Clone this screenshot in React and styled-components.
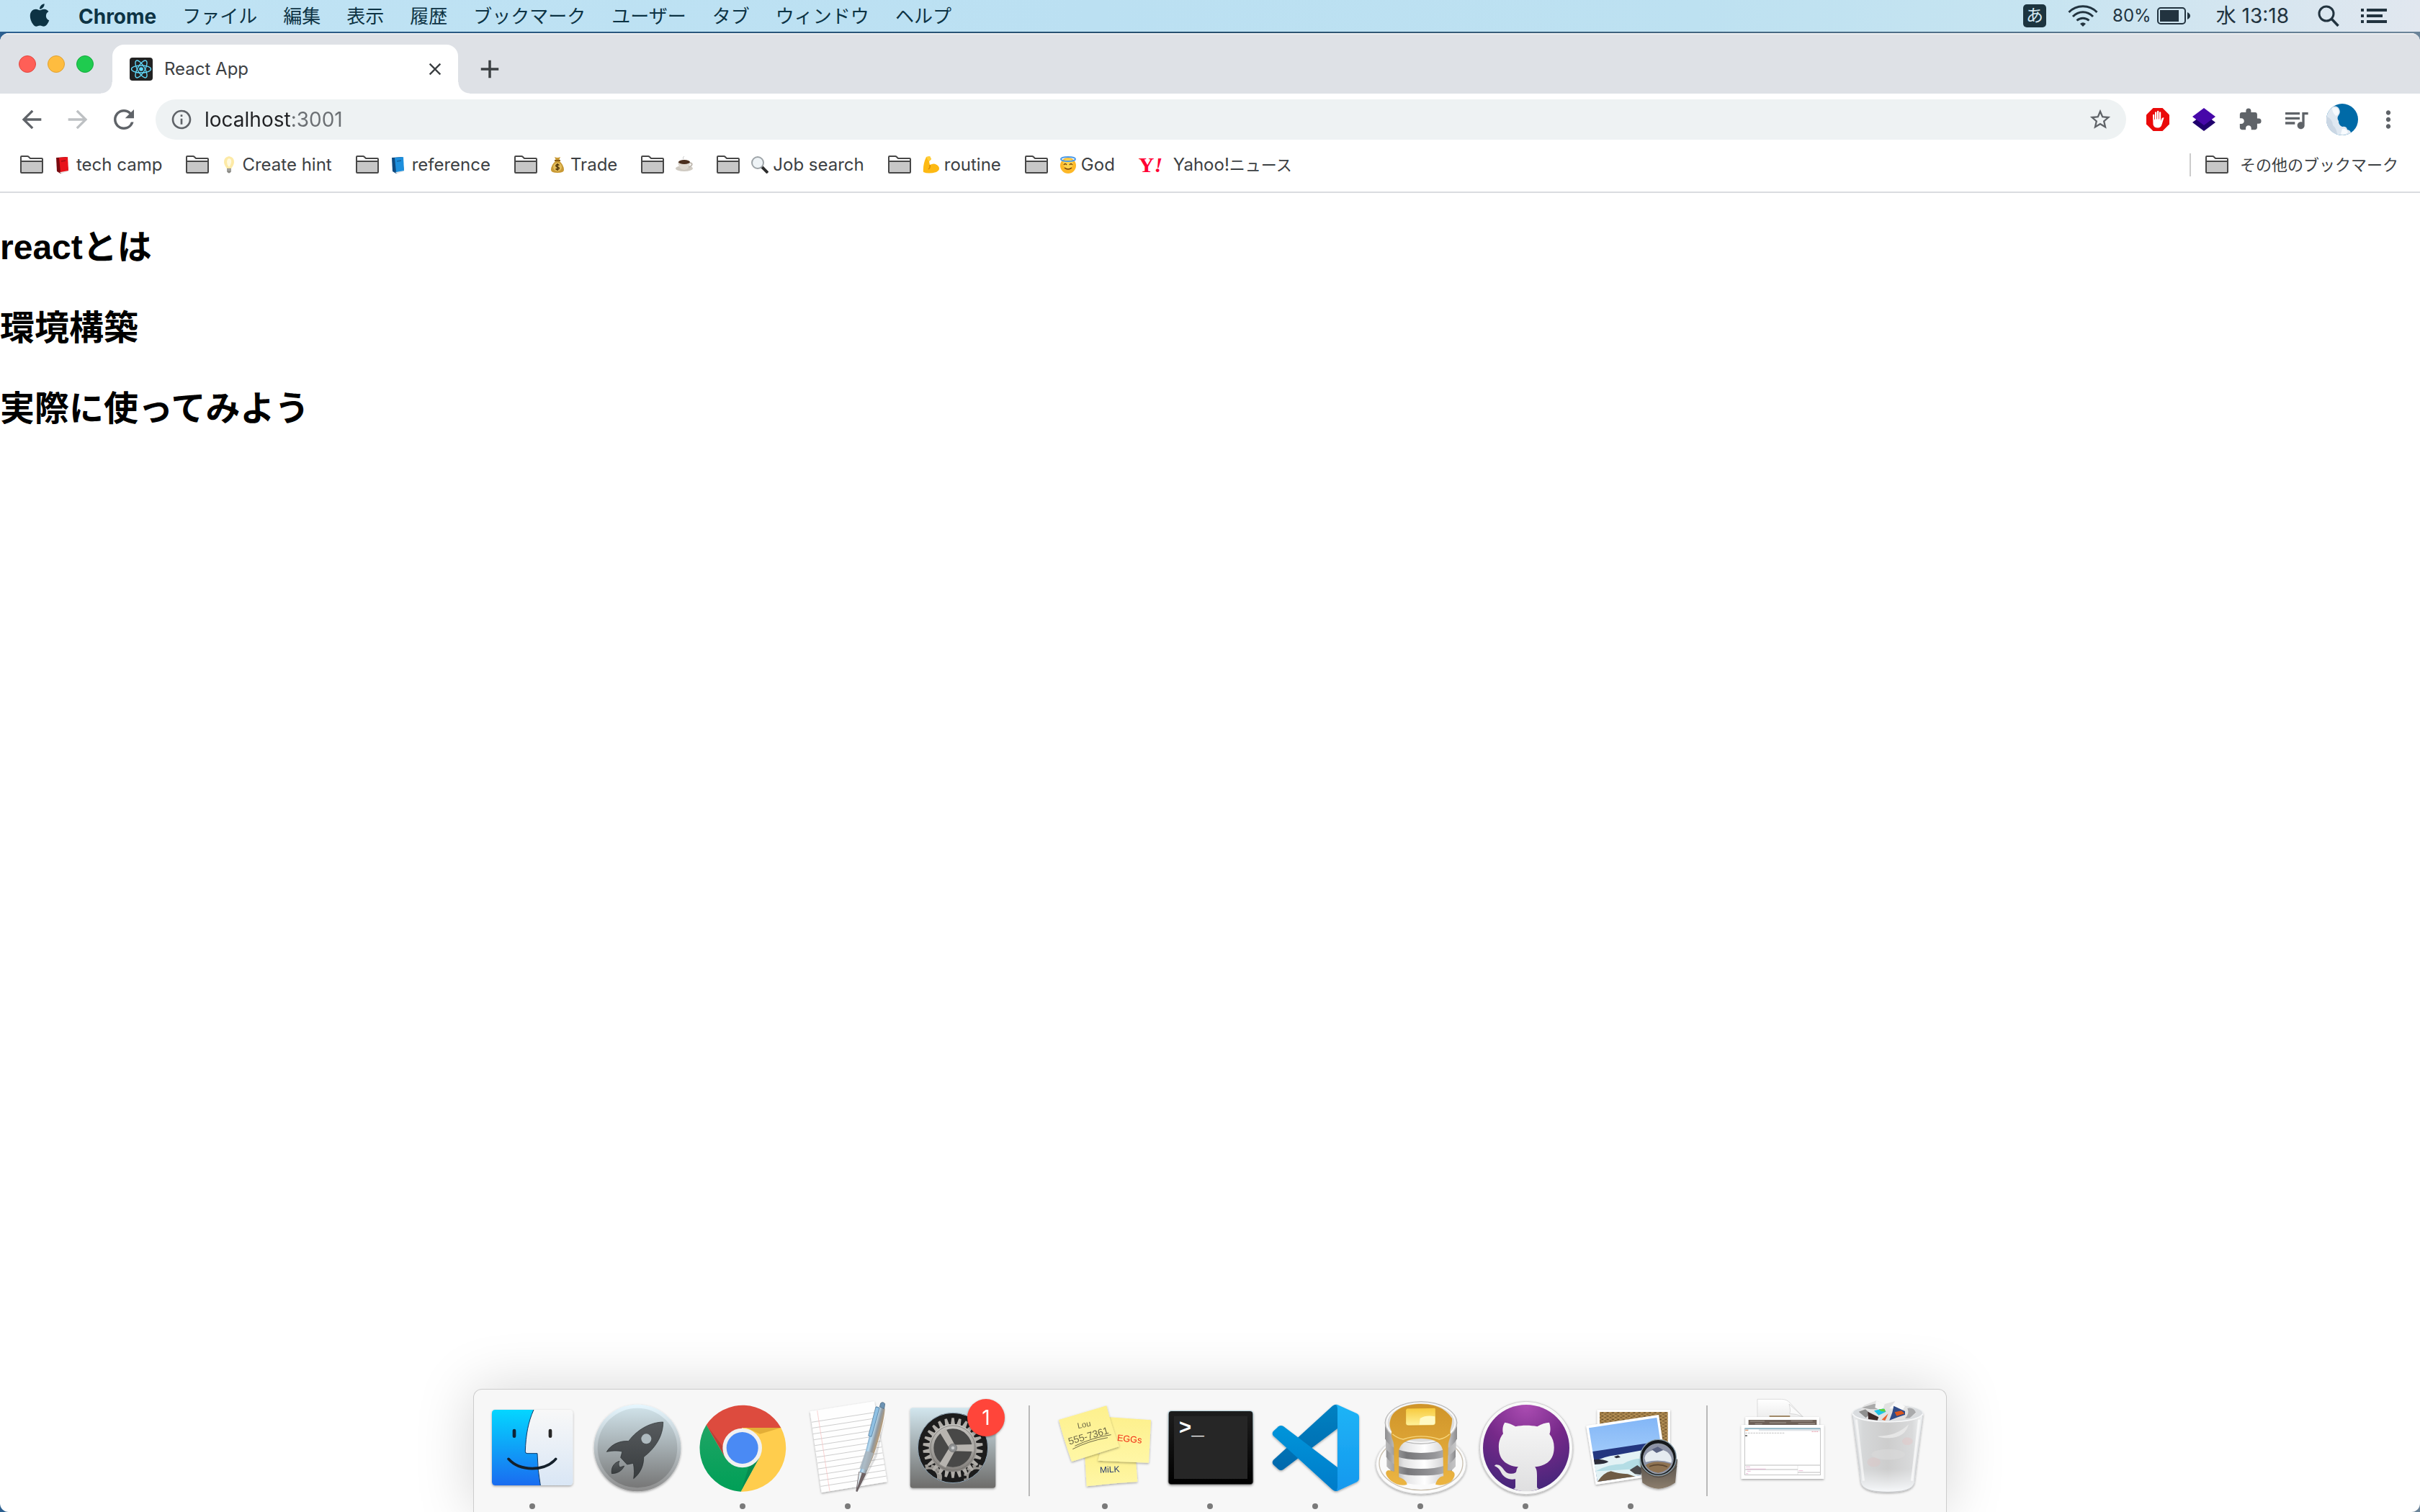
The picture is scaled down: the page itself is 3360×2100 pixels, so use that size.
import React from "react";
import styled, { createGlobalStyle } from "styled-components";
import { FaApple } from "react-icons/fa";
import {
  MdAdd,
  MdArrowBack,
  MdArrowForward,
  MdClose,
  MdExtension,
  MdInfoOutline,
  MdMoreVert,
  MdQueueMusic,
  MdRefresh,
  MdStarBorder,
} from "react-icons/md";

const GlobalStyle = createGlobalStyle`
  * {
    box-sizing: border-box;
  }

  body {
    margin: 0;
    background: #ffffff;
    font-family: Inter, "Noto Sans CJK JP", sans-serif;
  }

  button {
    padding: 0;
    border: 0;
    background: none;
    color: inherit;
    font: inherit;
    cursor: pointer;
  }
`;

const Desktop = styled.div`
  display: flex;
  flex-direction: column;
  min-height: 100vh;
  background: linear-gradient(to right, #2c5f8f, #27506f 50%, #6b8499);
`;

/* ---------- menu bar ---------- */

const MenuBar = styled.header`
  display: flex;
  align-items: center;
  height: 44px;
  padding: 0 46px 0 37px;
  background: linear-gradient(
    to right,
    #c0e3f4,
    #bbe0f2 45%,
    #bde1f1 70%,
    #c6e4f1 84%,
    #e1e7ef
  );
  color: #0d3344;
`;

const MenuList = styled.nav`
  display: flex;
  align-items: center;
  gap: 36px;
`;

const MenuButton = styled.button`
  display: flex;
  padding: ${(props) => (props.$icon ? "0 0 3px" : "2px 0 0")};
  font-size: ${(props) => (props.$app ? "28px" : "26px")};
  font-weight: ${(props) => (props.$app ? 700 : 400)};
  line-height: 40px;
  white-space: nowrap;
`;

const StatusArea = styled.div`
  display: flex;
  align-items: center;
  margin-left: auto;
  color: #22333f;
`;

const StatusItem = styled.button`
  display: flex;
  align-items: center;
  gap: 8px;
  margin-left: ${(props) => props.$gap}px;
  font-size: ${(props) => (props.$small ? "24px" : "28px")};
  line-height: 40px;
  white-space: nowrap;
`;

const InputSource = styled.button`
  width: 32px;
  height: 32px;
  border-radius: 5px;
  background: #1c343f;
  color: #d4e8f1;
  font-size: 24px;
  line-height: 30px;
`;

/* ---------- browser window ---------- */

const Window = styled.main`
  display: flex;
  flex: 1;
  flex-direction: column;
  margin-top: 2px;
  overflow: hidden;
  border-radius: 12px;
  background: #ffffff;
`;

const TabStrip = styled.div`
  display: flex;
  align-items: flex-end;
  height: 84px;
  padding-left: 26px;
  border-top: 2px solid #eceef0;
  background: #dee1e6;
`;

const Lights = styled.div`
  display: flex;
  align-self: flex-start;
  gap: 16px;
  padding-top: 29px;
`;

const Light = styled.button`
  width: 24px;
  height: 24px;
  border: 1px solid ${(props) => props.$edge};
  border-radius: 50%;
  background: ${(props) => props.$color};
`;

const Tab = styled.div`
  position: relative;
  display: flex;
  align-items: center;
  width: 480px;
  height: 68px;
  margin-left: 26px;
  padding: 0 18px 0 24px;
  border-radius: 16px 16px 0 0;
  background: #ffffff;
  color: #3c4043;

  &::before,
  &::after {
    content: "";
    position: absolute;
    bottom: 0;
    width: 16px;
    height: 16px;
  }

  &::before {
    right: 100%;
    background: radial-gradient(circle at 0 0, #dee1e6 15px, #ffffff 16px);
  }

  &::after {
    left: 100%;
    background: radial-gradient(circle at 100% 0, #dee1e6 15px, #ffffff 16px);
  }
`;

const TabTitle = styled.span`
  flex: 1;
  margin-left: 16px;
  font-size: 24px;
  line-height: 32px;
`;

const IconButton = styled.button`
  display: flex;
  align-items: center;
  justify-content: center;
  width: ${(props) => props.$size || 64}px;
  height: ${(props) => props.$size || 64}px;
  color: ${(props) => props.$color || "#5f6368"};
`;

const NewTab = styled(IconButton)`
  height: 68px;
  margin-left: 12px;
  color: #3c4043;
`;

const Toolbar = styled.div`
  display: flex;
  align-items: center;
  height: 72px;
  padding: 0 12px;
`;

const AddressBar = styled.div`
  display: flex;
  flex: 1;
  align-items: center;
  height: 56px;
  margin: 0 12px;
  padding: 0 4px 0 20px;
  border-radius: 28px;
  background: #eef2f3;
`;

/* host is darker than the port, split at the end of the host name */
const AddressInput = styled.input`
  flex: 1;
  margin-left: 16px;
  padding: 0;
  border: 0;
  outline: 0;
  background: linear-gradient(to right, #202124 119px, #6b6f73 119px);
  background-clip: text;
  color: transparent;
  caret-color: #202124;
  font: 400 28px/40px Inter, sans-serif;
`;

const Bookmarks = styled.nav`
  display: flex;
  align-items: center;
  gap: 33px;
  height: 66px;
  padding: 0 30px 10px 28px;
  border-bottom: 2px solid #dadce0;
`;

const Bookmark = styled.a`
  display: flex;
  align-items: center;
  color: #3c4043;
  font-size: 24px;
  line-height: 32px;
  text-decoration: none;
  white-space: nowrap;
`;

const BookmarkText = styled.span`
  margin-left: ${(props) => (props.$emoji ? "6px" : "16px")};
  font-size: ${(props) => (props.$kana ? "22px" : "24px")};
`;

const Kana = styled.span`
  font-size: 22px;
`;

const EmojiSvg = styled.svg`
  width: 24px;
  height: 24px;
  margin-left: 16px;
`;

const YahooMark = styled.span`
  width: 32px;
  color: #ff0033;
  font: 700 30px/32px "Liberation Serif", serif;
`;

const OtherBookmarks = styled.div`
  display: flex;
  align-items: center;
  margin-left: auto;
  padding-left: 20px;
  border-left: 2px solid #cccccc;
`;

const Page = styled.article`
  flex: 1;
  padding-bottom: 40px;
`;

const Heading = styled.h2`
  margin: 40px 0;
  color: #000000;
  font-family: "Liberation Sans", "Noto Sans CJK JP", sans-serif;
  font-size: 48px;
  font-weight: 700;
  line-height: 72px;
`;

/* ---------- dock ---------- */

const DockLayer = styled.footer`
  position: fixed;
  right: 0;
  bottom: 0;
  left: 0;
  display: flex;
  justify-content: center;
`;

const Dock = styled.div`
  display: flex;
  height: 171px;
  padding: 0 8px;
  border: 1px solid #cccccc;
  border-bottom: 0;
  border-radius: 12px 12px 0 0;
  background: #f7f7f7;
  box-shadow: 0 0 80px rgba(0, 0, 0, 0.17);
`;

const DockItem = styled.button`
  position: relative;
  display: flex;
  flex-direction: column;
  align-items: center;
  width: 146px;
`;

const DockSvg = styled.svg`
  width: 146px;
  height: 150px;
`;

const Running = styled.span`
  width: 8px;
  height: 8px;
  margin-top: 8px;
  border-radius: 50%;
  background: #7a7a7a;
`;

const Separator = styled.span`
  width: 2px;
  height: 126px;
  margin: 22px 31px 0 32px;
  background: #b9b9b9;
`;

const Badge = styled.span`
  position: absolute;
  top: 13px;
  left: 93px;
  width: 52px;
  height: 52px;
  border-radius: 50%;
  background: #ff453a;
  box-shadow: 0 1px 3px rgba(0, 0, 0, 0.35);
  color: #ffffff;
  font-size: 28px;
  line-height: 52px;
  text-align: center;
`;

/* ---------- small drawings ---------- */

const FolderIcon = () => (
  <svg width="32" height="26" viewBox="0 0 32 26" aria-hidden="true">
    <path d="M1 8H31V23Q31 24 30 24H2Q1 24 1 23Z" fill="#c7c7c7" />
    <path
      d="M1 8V2Q1 1 2 1H10Q11 1 12 2L14 4H30Q31 4 31 5V23Q31 24 30 24H2Q1 24 1 23V8H31"
      fill="none"
      stroke="#474747"
      strokeWidth="2"
    />
  </svg>
);

const Favicon = () => (
  <svg width="32" height="32" viewBox="0 0 32 32" aria-hidden="true">
    <rect width="32" height="32" rx="4" fill="#222222" />
    <g fill="none" stroke="#61dafb" strokeWidth="1.4">
      <ellipse cx="16" cy="16" rx="13.5" ry="5" />
      <ellipse cx="16" cy="16" rx="13.5" ry="5" transform="rotate(60 16 16)" />
      <ellipse cx="16" cy="16" rx="13.5" ry="5" transform="rotate(120 16 16)" />
    </g>
    <circle cx="16" cy="16" r="2.8" fill="#61dafb" />
  </svg>
);

const WifiIcon = () => (
  <svg width="42" height="30" viewBox="0 0 42 30" aria-hidden="true">
    <g fill="none" stroke="#22333f" strokeWidth="3">
      <path d="M1.5 10C12 -1 30 -1 40.500 10" />
      <path d="M7 16C15 7.500 27 7.500 35 16" />
      <path d="M12.500 21.500C17.500 17 24.500 17 29.500 21.500" />
    </g>
    <path d="M17 26Q21 22.500 25 26L21 30Z" fill="#22333f" />
  </svg>
);

const BatteryIcon = () => (
  <svg width="46" height="24" viewBox="0 0 46 24" aria-hidden="true">
    <rect x="1" y="1" width="38" height="22" rx="4" fill="none" stroke="#22333f" strokeWidth="2" />
    <rect x="4" y="4" width="26" height="16" fill="#22333f" />
    <path d="M42 7Q46 9 46 12Q46 15 42 17Z" fill="#22333f" />
  </svg>
);

const SearchIcon = () => (
  <svg width="30" height="30" viewBox="0 0 30 30" aria-hidden="true">
    <circle cx="12" cy="12" r="10" fill="none" stroke="#22333f" strokeWidth="3" />
    <path d="M19 19L28.500 29" stroke="#22333f" strokeWidth="3.500" />
  </svg>
);

const ListIcon = () => (
  <svg width="36" height="20" viewBox="0 0 36 20" fill="#22333f" aria-hidden="true">
    <path d="M0 0h4v4H0zM8 0h28v4H8zM0 8h4v4H0zM8 8h22v4H8zM0 16h4v4H0zM8 16h28v4H8z" />
  </svg>
);

const AdblockIcon = () => (
  <svg width="32" height="32" viewBox="0 0 32 32" aria-hidden="true">
    <path d="M9.500 0h13L32 9.500v13L22.500 32h-13L0 22.500v-13z" fill="#ea0a0a" />
    <path
      d="M9 9.500q1.200-1.400 2.200 0V16h.8V6q1.200-1.500 2.300 0v9.500h.7V4.500q1.200-1.500 2.300 0v11h.7V6q1.100-1.500 2.200 0v12l1.200-3.200q1-2.200 3.100-1.300l-2.800 9Q20.500 27.500 16 27.500 10.500 27.500 9.500 23Z"
      fill="#ffffff"
    />
  </svg>
);

const LayersIcon = () => (
  <svg width="32" height="32" viewBox="0 0 32 32" aria-hidden="true">
    <path d="M16 8L32 20 16 32 0 20Z" fill="#20006e" />
    <path d="M16 0L32 12 16 24 0 12Z" fill="#4708a9" />
  </svg>
);

const Avatar = () => (
  <svg width="44" height="44" viewBox="0 0 44 44" aria-hidden="true">
    <clipPath id="avatarClip">
      <circle cx="22" cy="22" r="22" />
    </clipPath>
    <g clipPath="url(#avatarClip)">
      <rect width="44" height="44" fill="#006aa7" />
      <path
        d="M0 0H10L8 4Q16 2 18 8Q20 12 17 16Q14 20 17 24Q17 30 22 32Q28 31 29 36Q33 36 35 42L30 44H0Z"
        fill="#dfe8f1"
      />
      <path d="M8 6Q16 4 17 10Q18 15 13 17Q8 12 8 6Z" fill="#f6fafd" />
      <path d="M22 35Q28 34 30 40Q26 44 20 42Z" fill="#f8fbfe" />
      <path d="M0 18Q8 20 9 30Q14 34 15 42L0 44Z" fill="#cbd7e4" />
    </g>
  </svg>
);

const bookDrawing = (cover, spine) => (
  <>
    <path d="M2 2L16 1 19 20 8 24 3 21Z" fill={spine} />
    <path d="M7 22L19 18V21L9 24Z" fill="#e9e9e9" />
    <path d="M6 2L18 1 19 20 8 22Z" fill={cover} />
    <path d="M9 6l6-1v2l-6 1z" fill={spine} opacity="0.5" />
  </>
);

const emojiDrawings = {
  "📕": bookDrawing("#e8131b", "#7a0a10"),
  "📘": bookDrawing("#1d8fdd", "#0e4a80"),
  "💡": (
    <>
      <path d="M12 0Q19 1 19 8Q19 12 15 17H9Q5 12 5 8Q5 1 12 0Z" fill="#fdeaa6" />
      <path d="M12 3Q16 4 15 9Q14 13 12 15Q9 12 9 8Q9 4 12 3Z" fill="#fff9de" />
      <path d="M9 17H15V21Q12 26 9 21Z" fill="#8b8b87" />
      <path d="M9 19H15" stroke="#c4c4c0" />
    </>
  ),
  "💰": (
    <>
      <path d="M8 1Q12 3 16 1L14 6Q21 12 21 19Q21 23 12 23Q3 23 3 19Q3 12 10 6Z" fill="#c99a35" />
      <path d="M8 6H16" stroke="#8a5d14" strokeWidth="2" />
      <circle cx="12" cy="15" r="6" fill="#e3bd5c" />
      <path d="M14.500 12.500Q12 10.500 10 12.500Q9.500 14.500 12 15Q15 15.500 14 17.500Q12 19 9.500 17.500M12 10V20" fill="none" stroke="#54380a" strokeWidth="1.500" />
    </>
  ),
  "☕": (
    <>
      <ellipse cx="12" cy="17" rx="12" ry="4" fill="#cfcac2" />
      <path d="M3 8H20Q20 18 12 19Q4 18 3 8Z" fill="#ddd8d0" />
      <path d="M20 9Q25 10 21 14L18 15" fill="none" stroke="#c0bab1" strokeWidth="2" />
      <ellipse cx="12" cy="8" rx="8" ry="3" fill="#4a2e1d" />
      <path d="M11 4Q9 2 12 0" fill="none" stroke="#c9c9c9" />
    </>
  ),
  "🔍": (
    <>
      <path d="M14 14L23 23" stroke="#2c2c2c" strokeWidth="4" />
      <circle cx="9" cy="9" r="8" fill="#eef3f6" stroke="#9ea4a8" strokeWidth="2" />
    </>
  ),
  "💪": (
    <>
      <path d="M5 1L10 0 12 4 9 7 10 12Q17 8 22 14Q25 19 19 22Q8 25 1 22Q0 12 5 1Z" fill="#fdb913" />
      <path d="M5 1L10 0 12 4 9 7 7 5Z" fill="#ffcf3a" />
      <path d="M10 12Q11 16 8 18" fill="none" stroke="#d98906" strokeWidth="1.500" />
    </>
  ),
  "😇": (
    <>
      <circle cx="12" cy="13" r="11" fill="#fdb827" />
      <circle cx="12" cy="10" r="7" fill="#ffd24d" />
      <ellipse cx="12" cy="4" rx="10" ry="3" fill="none" stroke="#4d9be8" strokeWidth="2" />
      <path d="M6 12Q8 9 10 12M14 12Q16 9 18 12M7 16Q12 20 17 16" fill="none" stroke="#75430a" strokeWidth="1.500" />
    </>
  ),
};

const Emoji = ({ char }) => (
  <EmojiSvg viewBox="0 0 24 24" role="img" aria-label={char}>
    {emojiDrawings[char]}
  </EmojiSvg>
);

/* ---------- dock drawings ---------- */

const Gradient = ({ id, from, to }) => (
  <linearGradient id={id} x1="0" y1="0" x2="0" y2="1">
    <stop offset="0" stopColor={from} />
    <stop offset="1" stopColor={to} />
  </linearGradient>
);

const Shadow = ({ id }) => (
  <filter id={id} x="-10%" y="-10%" width="120%" height="125%">
    <feDropShadow dx="0" dy="4" stdDeviation="4" floodOpacity="0.35" />
  </filter>
);

const FinderIcon = () => (
  <DockSvg viewBox="78 90 438 450">
    <Gradient id="finderBlue" from="#04d6ff" to="#1a6cf0" />
    <Gradient id="finderWhite" from="#f8f8f8" to="#d9e6f5" />
    <Shadow id="finderShadow" />
    <rect x="129" y="174" width="337" height="315" rx="14" fill="url(#finderWhite)" filter="url(#finderShadow)" />
    <path
      d="M143 174H303C280 225 270 280 268 346Q267 356 276 356H318Q319 425 331 489H143Q129 489 129 475V188Q129 174 143 174Z"
      fill="url(#finderBlue)"
    />
    <path d="M303 174C280 225 270 280 268 346Q267 356 276 356H318Q319 425 331 489" fill="none" stroke="#0b3a6a" strokeWidth="3" />
    <rect x="215" y="254" width="14" height="37" rx="7" fill="#0f2436" />
    <rect x="365" y="254" width="14" height="37" rx="7" fill="#262626" />
    <path d="M198 379C245 432 350 432 395 379" fill="none" stroke="#14202b" strokeWidth="11" strokeLinecap="round" />
  </DockSvg>
);

const LaunchpadIcon = () => (
  <DockSvg viewBox="516 90 438 450">
    <Gradient id="padRim" from="#e6f7ff" to="#8d8d8d" />
    <Gradient id="padFace" from="#cfe1e8" to="#777777" />
    <Gradient id="padRocket" from="#575b5e" to="#383c3e" />
    <Shadow id="padShadow" />
    <circle cx="735" cy="333" r="181" fill="url(#padRim)" filter="url(#padShadow)" />
    <circle cx="735" cy="333" r="166" fill="url(#padFace)" />
    <g fill="url(#padRocket)" stroke="#24282b" strokeWidth="2">
      <path d="M842 225C790 226 735 255 698 305C662 302 625 318 607 349C630 344 655 344 672 348L665 373L692 402L718 397C722 420 723 440 719 461C748 438 762 405 761 371C808 335 842 285 842 225Z" />
      <path d="M660 388C634 396 625 418 628 440C652 440 672 428 680 408L662 414C655 406 656 396 660 388Z" />
    </g>
    <circle cx="772" cy="295" r="21" fill="#aebabf" />
  </DockSvg>
);

const ChromeIcon = () => (
  <DockSvg viewBox="-126 90 438 450">
    <Gradient id="chromeGreen" from="#1fa565" to="#009f57" />
    <path d="M-58 237A182 182 0 0 1 253 249H92L21 374Z" fill="#dd4b3e" />
    <path d="M-58 237A182 182 0 0 0 86 515L163 374H21Z" fill="url(#chromeGreen)" />
    <path d="M253 249A182 182 0 0 1 86 515L163 374L92 249Z" fill="#ffcd4d" />
    <path d="M-58 237L21 374L13 330Z" fill="#a53a30" opacity="0.6" />
    <path d="M253 249H110L165 275Z" fill="#c88f22" opacity="0.5" />
    <path d="M86 515L163 374L120 408Z" fill="#057a44" opacity="0.5" />
    <circle cx="92" cy="333" r="82" fill="#f1f1f1" />
    <circle cx="92" cy="333" r="66" fill="#4a8af4" />
  </DockSvg>
);

const TextEditIcon = () => (
  <DockSvg viewBox="312 90 438 450">
    <Shadow id="paperShadow" />
    <linearGradient id="penBody" gradientUnits="userSpaceOnUse" x1="610" y1="300" x2="655" y2="312">
      <stop offset="0" stopColor="#5e8fb8" />
      <stop offset="0.35" stopColor="#b9dcf2" />
      <stop offset="0.65" stopColor="#8f98a0" />
      <stop offset="1" stopColor="#b99c76" />
    </linearGradient>
    <path d="M374 181L642 139L695 474L422 519Z" fill="#fefefe" filter="url(#paperShadow)" />
    {Array.from({ length: 12 }, (_, i) => (
      <path
        key={i}
        d={`M${380 + 3.5 * i} ${226 + 24.3 * i}L${650 + 3.8 * i} ${184 + 24.2 * i}`}
        stroke="#b5b5b5"
        strokeWidth="2"
      />
    ))}
    <path d="M404 177L456 513" stroke="#f7bcbc" strokeWidth="2" />
    <path d="M690 200L640 370L575 515L652 370Z" fill="#000000" opacity="0.12" />
    <path d="M650 160L686 170C684 215 655 320 636 372L603 450L571 515L566 513L577 447L606 345Z" fill="url(#penBody)" />
    <path d="M606 345L640 355L612 425L580 418Z" fill="#aab4bb" opacity="0.8" />
    <path d="M577 432L608 440L571 516L565 514Z" fill="#6d6264" />
    <path d="M579 434L590 437L570 500Z" fill="#dde9ef" />
    <path d="M664 162L668 147Q677 138 686 149L683 170Z" fill="#6c93b4" stroke="#405a70" strokeWidth="2" />
    <path d="M648 162L663 166L630 286L617 282Z" fill="#8fc1e4" stroke="#456d8c" strokeWidth="2" />
  </DockSvg>
);

const SettingsIcon = () => (
  <DockSvg viewBox="750 90 438 450">
    <Gradient id="prefPlate" from="#d2e6ee" to="#6d6c6a" />
    <Gradient id="prefMetal" from="#c3c1bd" to="#85827e" />
    <Shadow id="prefShadow" />
    <clipPath id="prefHole">
      <circle cx="969" cy="333" r="144" />
    </clipPath>
    <rect x="791" y="166" width="356" height="334" rx="12" fill="url(#prefPlate)" filter="url(#prefShadow)" />
    <circle cx="969" cy="333" r="146" fill="#1c1c1c" stroke="#93a9ba" strokeWidth="3" />
    <g clipPath="url(#prefHole)" fill="none" stroke="#9a9792" strokeWidth="9">
      <circle cx="870" cy="455" r="48" strokeWidth="12" strokeDasharray="14 12" />
      <circle cx="870" cy="455" r="38" />
      <circle cx="1068" cy="455" r="48" strokeWidth="12" strokeDasharray="14 12" />
      <circle cx="1068" cy="455" r="38" />
    </g>
    {Array.from({ length: 26 }, (_, i) => (
      <path
        key={i}
        d="M960 236L964 208H974L978 236Z"
        fill="#b0ada8"
        transform={`rotate(${(i * 360) / 26} 969 333)`}
      />
    ))}
    <circle cx="969" cy="333" r="90" fill="#484847" stroke="url(#prefMetal)" strokeWidth="20" />
    <circle cx="969" cy="333" r="93" fill="none" stroke="#6e6b67" strokeWidth="2" />
    {[0, 120, 240].map((angle) => (
      <path
        key={angle}
        d="M969 320L1055 318V348L969 346Z"
        fill="#b7b4af"
        transform={`rotate(${angle} 969 333)`}
      />
    ))}
    <circle cx="969" cy="333" r="17" fill="#8d8f90" stroke="#6a6a69" strokeWidth="2" />
    <circle cx="969" cy="333" r="7" fill="#c7c9ca" />
  </DockSvg>
);

const StickiesIcon = () => (
  <DockSvg viewBox="63 90 438 450" fontFamily="Liberation Sans, sans-serif">
    <Gradient id="note" from="#fdf08d" to="#fff7a6" />
    <Shadow id="noteShadow" />
    <path d="M198 350L410 370L418 474Q310 480 206 493Z" fill="url(#note)" filter="url(#noteShadow)" />
    <path d="M300 205L474 217L465 395L253 386Z" fill="url(#note)" filter="url(#noteShadow)" />
    <path d="M90 216L289 157Q310 245 342 327L144 390Q112 300 90 216Z" fill="url(#note)" filter="url(#noteShadow)" />
    <g fill="#6c6745">
      <text x="170" y="253" fontSize="34" transform="rotate(-12 170 253)">Lou</text>
      <text x="134" y="320" fontSize="41" transform="rotate(-16 134 320)">555-7361</text>
    </g>
    <path d="M157 325Q230 290 308 278M148 338Q210 305 294 290" fill="none" stroke="#6c6745" strokeWidth="3" />
    <text x="332" y="303" fontSize="38" fill="#f22a12" transform="rotate(6 332 303)">EGGs</text>
    <text x="262" y="437" fontSize="36" fill="#24386f" transform="rotate(-3 262 437)">MiLK</text>
  </DockSvg>
);

const TerminalIcon = () => (
  <DockSvg viewBox="501 90 438 450">
    <Gradient id="termFrame" from="#1d1d1d" to="#000000" />
    <Gradient id="termEdge" from="#b9d3dc" to="#6b6b6b" />
    <Shadow id="termShadow" />
    <rect x="545" y="177" width="356" height="310" rx="14" fill="url(#termEdge)" filter="url(#termShadow)" />
    <rect x="548" y="180" width="350" height="304" rx="12" fill="url(#termFrame)" />
    <rect x="570" y="200" width="306" height="262" fill="#262626" />
    <text x="590" y="276" fill="#ffffff" fontFamily="Liberation Mono, monospace" fontSize="88" fontWeight="700">
      &gt;_
    </text>
  </DockSvg>
);

const CodeIcon = () => (
  <DockSvg viewBox="39 90 438 450">
    <Gradient id="codePanel" from="#1fb4f6" to="#1498ee" />
    <Gradient id="codeBand" from="#0095da" to="#007bc9" />
    <Gradient id="codeDark" from="#0081c2" to="#0069ad" />
    <Shadow id="codeShadow" />
    <g filter="url(#codeShadow)">
      <path d="M330 158Q339 151 351 153V252L126 422Q115 430 105 422L84 403Q76 393 84 383Z" fill="url(#codeDark)" />
      <path d="M351 512Q339 515 330 507L84 283Q76 272 84 263L105 244Q115 236 126 243L351 414Z" fill="url(#codeBand)" />
      <path d="M344 153H351L432 190Q441 195 441 205V461Q441 470 432 475L351 512H344Q351 508 351 498V168Q351 158 344 153Z" fill="url(#codePanel)" />
    </g>
  </DockSvg>
);

const DatabaseIcon = () => (
  <DockSvg viewBox="477 90 438 450">
    <linearGradient id="tin" x1="0" y1="0" x2="1" y2="0">
      <stop offset="0" stopColor="#8e8e90" />
      <stop offset="0.25" stopColor="#e2e2e3" />
      <stop offset="0.55" stopColor="#ffffff" />
      <stop offset="0.85" stopColor="#d2d2d4" />
      <stop offset="1" stopColor="#8a8a8c" />
    </linearGradient>
    <linearGradient id="tinDark" x1="0" y1="0" x2="1" y2="0">
      <stop offset="0" stopColor="#b9b9ba" />
      <stop offset="0.3" stopColor="#77777a" />
      <stop offset="0.7" stopColor="#97979a" />
      <stop offset="1" stopColor="#c5c5c6" />
    </linearGradient>
    <Gradient id="syrup" from="#cf9429" to="#ecb542" />
    <Gradient id="butter" from="#f7c93c" to="#fff29a" />
    <Shadow id="plateShadow" />
    <ellipse cx="699" cy="400" rx="188" ry="125" fill="#fbfbfb" stroke="#cccccc" strokeWidth="2" filter="url(#plateShadow)" />
    <ellipse cx="699" cy="397" rx="174" ry="112" fill="none" stroke="#c9bfae" strokeWidth="4" />
    <path d="M565 390Q565 485 699 487Q835 485 835 390Z" fill="url(#tin)" />
    <path d="M556 360V410Q585 448 699 448Q815 448 843 410V360Z" fill="url(#tinDark)" />
    <path d="M554 310V370Q580 420 699 420Q820 420 843 370V310Z" fill="url(#tin)" />
    <path d="M552 290V335Q580 382 699 382Q820 382 845 335V290Z" fill="url(#tinDark)" />
    <path d="M549 230V295Q580 354 699 354Q820 354 849 295V230Z" fill="url(#tin)" />
    <ellipse cx="699" cy="228" rx="150" ry="88" fill="#dedede" stroke="#b3b3b3" strokeWidth="3" />
    <ellipse cx="699" cy="228" rx="142" ry="82" fill="none" stroke="#ffffff" strokeWidth="4" />
    <path
      d="M699 150C780 150 810 185 828 210C830 240 815 260 822 275C823 290 812 300 812 325L809 428C845 425 845 450 825 472Q795 493 760 485C765 465 780 450 793 452L791 345C785 315 765 295 699 293C635 295 612 315 606 345L606 455C620 460 640 470 640 485Q610 495 575 470C545 445 550 425 568 427L588 432L586 320C585 300 572 290 577 265C565 240 568 225 575 205C590 170 640 150 699 150Z"
      fill="url(#syrup)"
      stroke="#dba335"
      strokeWidth="1"
    />
    <path d="M580 275Q600 292 625 297Q700 272 775 297Q800 292 818 275" fill="none" stroke="#f7d67c" strokeWidth="4" />
    <path d="M640 168L755 166Q762 168 760 175V228Q760 238 750 239L645 240Q635 240 635 230V175Z" fill="url(#butter)" stroke="#c58a1c" strokeWidth="2" />
    <path d="M695 210Q720 195 757 202V226Q757 236 748 236L692 237Z" fill="#fff9c4" />
  </DockSvg>
);

const GithubIcon = () => (
  <DockSvg viewBox="15 90 438 450">
    <radialGradient id="hubPurple" cx="0.5" cy="0" r="1">
      <stop offset="0" stopColor="#ac4db3" />
      <stop offset="0.5" stopColor="#762989" />
      <stop offset="1" stopColor="#45267a" />
    </radialGradient>
    <Gradient id="hubCat" from="#f6f6f6" to="#dfdfe0" />
    <Shadow id="hubShadow" />
    <circle cx="237" cy="333" r="194" fill="#f8f8f8" stroke="#bdbdbd" strokeWidth="2" filter="url(#hubShadow)" />
    <circle cx="237" cy="333" r="180" fill="url(#hubPurple)" />
    <path
      d="M148 227C163 229 180 236 193 244C222 238 254 238 283 244C300 233 318 228 333 227C339 245 339 262 334 275C348 292 354 312 353 335C352 380 325 407 273 412C281 420 282 435 282 447V495Q283 505 292 503Q265 514 237 514Q210 514 182 503Q191 505 192 495V463C165 468 145 457 134 438C126 421 118 413 105 408C108 400 122 402 132 410C146 422 150 440 172 440C186 441 195 437 196 430C197 420 200 415 204 412C150 407 124 378 123 335C121 310 128 290 141 274C137 258 139 240 148 227Z"
      fill="url(#hubCat)"
    />
  </DockSvg>
);

const PreviewIcon = () => (
  <DockSvg viewBox="453 90 438 450">
    <Gradient id="sky" from="#82b6f7" to="#b8dafc" />
    <Gradient id="loupe" from="#4f4b47" to="#8b7d6c" />
    <Shadow id="photoShadow" />
    <pattern id="sand" width="22" height="14" patternUnits="userSpaceOnUse">
      <rect width="22" height="14" fill="#a37f48" />
      <path d="M1 3h7v3H1zM13 9h6v3h-6z" fill="#5b4526" />
      <path d="M11 2h7v3h-7zM3 9h6v3H3z" fill="#caa76b" />
    </pattern>
    <rect x="533" y="174" width="304" height="240" fill="#ffffff" filter="url(#photoShadow)" />
    <rect x="543" y="183" width="284" height="220" fill="url(#sand)" />
    <path d="M487 241L789 195L826 440L527 486Z" fill="#ffffff" filter="url(#photoShadow)" />
    <path d="M498 250L781 207L815 432L534 474Z" fill="url(#sky)" />
    <path d="M514 348L796 305L815 432L534 474Z" fill="#23367f" />
    <path d="M519 392Q560 368 610 363L720 343L800 335L815 432L534 474Z" fill="#e3f2f5" />
    <path d="M527 430Q580 400 640 400Q690 370 740 380L700 420L620 425Z" fill="#9fd4de" opacity="0.7" />
    <path d="M519 382Q545 376 580 390Q570 400 522 402Z" fill="#2b2c38" />
    <path d="M603 370L620 364 630 372 612 376Z" fill="#2b2c38" />
    <path d="M534 474Q560 435 590 430Q620 440 660 442L690 452L660 456Z" fill="#6f5b45" />
    <path d="M668 425L700 405 720 420 715 445 690 442Z" fill="#4b4a4c" />
    <path d="M711 375L721 478Q787 528 858 478L867 380Z" fill="url(#loupe)" filter="url(#photoShadow)" />
    <path d="M713 410Q787 500 865 410" fill="none" stroke="#37332f" strokeWidth="2" />
    <circle cx="787" cy="373" r="75" fill="#15181b" stroke="#8ba0ad" strokeWidth="4" />
    <circle cx="787" cy="378" r="63" fill="#8d93a6" stroke="#aeb5ba" strokeWidth="2" />
    <path d="M730 375Q735 350 765 342Q800 335 825 350Q848 370 842 395Q790 378 735 392Z" fill="#e5ebf0" />
    <path d="M734 405Q770 380 840 400Q830 430 787 437Q750 432 734 405Z" fill="#8f7352" />
    <path d="M760 340L785 328 808 342 780 354Z" fill="#5a6382" />
    <path d="M750 410Q790 395 825 412" fill="none" stroke="#5c4630" strokeWidth="5" />
  </DockSvg>
);

const DownloadsIcon = () => (
  <DockSvg viewBox="186 90 438 450">
    <Gradient id="sheet" from="#ffffff" to="#ededed" />
    <Shadow id="stackShadow" />
    <path d="M300 130H400Q425 130 438 148L492 206H300Z" fill="url(#sheet)" stroke="#cfcfcf" strokeWidth="2" />
    <path d="M432 150Q440 178 434 190Q465 190 490 204Z" fill="#fafafa" stroke="#cccccc" strokeWidth="2" />
    <path d="M350 198H436V206H350Z" fill="#a48c6b" />
    <rect x="250" y="204" width="308" height="60" fill="#ffffff" filter="url(#stackShadow)" />
    <rect x="263" y="216" width="284" height="24" fill="#6f6259" />
    <path d="M270 222H330M350 228H420M440 221H530M290 233H320M470 232H540" stroke="#a39a92" strokeWidth="3" />
    <rect x="233" y="237" width="344" height="225" fill="#ffffff" filter="url(#stackShadow)" />
    <rect x="248" y="251" width="314" height="195" fill="#ffffff" stroke="#a9a9a9" strokeWidth="2" />
    <rect x="248" y="250" width="314" height="6" fill="#93bccd" />
    <rect x="249" y="256" width="312" height="6" fill="#dee1e6" />
    <rect x="264" y="256" width="42" height="7" fill="#ffffff" />
    <path d="M250 259H261" stroke="#f08a4b" strokeWidth="3" />
    <path d="M250 271H415" stroke="#a5a5a5" strokeWidth="2" strokeDasharray="8 3" />
    <path d="M527 265H556" stroke="#d3425b" strokeWidth="2" strokeDasharray="4 3" />
    <path d="M249 282H258" stroke="#444444" strokeWidth="4" />
    <path d="M249 405H562M249 423H468M468 435H562" stroke="#d4d4d4" strokeWidth="4" />
    <path d="M468 405V446" stroke="#c3c3c3" />
    <path d="M252 412H270M254 421H335M258 430H272M472 428H490M252 440H262" stroke="#dd9ac4" strokeWidth="2" />
  </DockSvg>
);

const TrashIcon = () => (
  <DockSvg viewBox="624 90 438 450">
    <linearGradient id="bin" x1="0" y1="0" x2="1" y2="0">
      <stop offset="0" stopColor="#e9ebed" />
      <stop offset="0.15" stopColor="#d5d7d8" />
      <stop offset="0.5" stopColor="#cdcdcd" />
      <stop offset="0.85" stopColor="#d9dadb" />
      <stop offset="1" stopColor="#f2f4f5" />
    </linearGradient>
    <Gradient id="binFoot" from="#f1f3f500" to="#f6f8fa" />
    <Shadow id="binShadow" />
    <path d="M696 188L732 478Q740 517 843 517Q945 517 953 478L990 188Z" fill="url(#bin)" stroke="#c5c9cd" strokeWidth="2" filter="url(#binShadow)" />
    <path d="M724 420L732 478Q740 515 843 515Q945 515 953 478L960 420Z" fill="url(#binFoot)" />
    <ellipse cx="843" cy="188" rx="147" ry="36" fill="#d9dcdf" stroke="#eef0f1" strokeWidth="4" />
    <path d="M722 185L745 155 795 136 830 150 872 139 905 158 950 168 962 190 920 212 843 220 760 212Z" fill="#e2e2e2" />
    <path d="M735 165L785 150 825 152 815 172 770 172Z" fill="#a9a9a9" />
    <path d="M722 182L750 172 770 190 752 208Z" fill="#8f8f8f" />
    <path d="M795 136L830 150 820 180 790 165Z" fill="#f7f7f7" />
    <path d="M786 178L825 169 836 182 805 197Z" fill="#20c3e8" />
    <path d="M805 172L830 170 834 182 815 180Z" fill="#5fd13c" />
    <path d="M760 182L805 205 800 218 762 213Z" fill="#3d2a2a" />
    <path d="M845 190L832 219 818 215Z" fill="#e8632f" />
    <path d="M850 168L875 138 915 160 905 175Z" fill="#f9f9f9" />
    <path d="M868 158L915 180 915 195 885 205 850 218 862 185Z" fill="#304b87" />
    <path d="M872 184L900 178 913 190 880 200Z" fill="#d9571f" />
    <path d="M925 168Q950 162 960 185L935 208 915 210Q935 190 925 168Z" fill="#a9aaac" />
    <path d="M697 192Q720 224 843 224Q965 224 989 192" fill="none" stroke="#f6f7f8" strokeWidth="5" />
    <path d="M800 284Q880 285 930 235Q915 290 850 292Q815 292 800 284Z" fill="#ebebeb" opacity="0.8" />
    <ellipse cx="785" cy="392" rx="28" ry="20" fill="#dfc4c2" opacity="0.4" />
    <ellipse cx="925" cy="305" rx="22" ry="16" fill="#e6c4c4" opacity="0.4" />
    <ellipse cx="845" cy="360" rx="70" ry="22" fill="#dadada" opacity="0.6" />
    <path d="M712 215L742 470" stroke="#ffffff" strokeWidth="10" opacity="0.6" />
    <path d="M974 215L944 470" stroke="#ffffff" strokeWidth="10" opacity="0.7" />
  </DockSvg>
);

/* ---------- data ---------- */

const menus = [
  "ファイル",
  "編集",
  "表示",
  "履歴",
  "ブックマーク",
  "ユーザー",
  "タブ",
  "ウィンドウ",
  "ヘルプ",
];

const bookmarks = [
  { emoji: "📕", text: "tech camp" },
  { emoji: "💡", text: "Create hint" },
  { emoji: "📘", text: "reference" },
  { emoji: "💰", text: "Trade" },
  { emoji: "☕" },
  { emoji: "🔍", text: "Job search" },
  { emoji: "💪", text: "routine" },
  { emoji: "😇", text: "God" },
];

const headings = ["reactとは", "環境構築", "実際に使ってみよう"];

const dockGroups = [
  [
    { name: "Finder", icon: <FinderIcon />, running: true },
    { name: "Launchpad", icon: <LaunchpadIcon /> },
    { name: "Google Chrome", icon: <ChromeIcon />, running: true },
    { name: "TextEdit", icon: <TextEditIcon />, running: true },
    { name: "System Preferences", icon: <SettingsIcon />, badge: 1 },
  ],
  [
    { name: "Stickies", icon: <StickiesIcon />, running: true },
    { name: "Terminal", icon: <TerminalIcon />, running: true },
    { name: "Visual Studio Code", icon: <CodeIcon />, running: true },
    { name: "Sequel Pro", icon: <DatabaseIcon />, running: true },
    { name: "GitHub Desktop", icon: <GithubIcon />, running: true },
    { name: "Preview", icon: <PreviewIcon />, running: true },
  ],
  [
    { name: "Downloads", icon: <DownloadsIcon /> },
    { name: "Trash", icon: <TrashIcon /> },
  ],
];

function App() {
  return (
    <Desktop>
      <GlobalStyle />
      <MenuBar>
        <MenuList aria-label="Menu bar">
          <MenuButton $icon aria-label="Apple">
            <FaApple size={36} />
          </MenuButton>
          <MenuButton $app>Chrome</MenuButton>
          {menus.map((menu) => (
            <MenuButton key={menu}>{menu}</MenuButton>
          ))}
        </MenuList>
        <StatusArea>
          <InputSource>あ</InputSource>
          <StatusItem $gap={30} aria-label="Wi-Fi">
            <WifiIcon />
          </StatusItem>
          <StatusItem $gap={20} $small>
            80%
            <BatteryIcon />
          </StatusItem>
          <StatusItem $gap={36}>水 13:18</StatusItem>
          <StatusItem $gap={40} aria-label="Search">
            <SearchIcon />
          </StatusItem>
          <StatusItem $gap={30} aria-label="Notifications">
            <ListIcon />
          </StatusItem>
        </StatusArea>
      </MenuBar>

      <Window>
        <TabStrip>
          <Lights>
            <Light $color="#ff5f57" $edge="#e2463f" aria-label="Close window" />
            <Light $color="#febc3f" $edge="#dfa133" aria-label="Minimize" />
            <Light $color="#1fcb4f" $edge="#12ac3a" aria-label="Zoom" />
          </Lights>
          <Tab>
            <Favicon />
            <TabTitle>React App</TabTitle>
            <IconButton $size={28} $color="#3c4043" aria-label="Close tab">
              <MdClose size={28} />
            </IconButton>
          </Tab>
          <NewTab aria-label="New tab">
            <MdAdd size={42} />
          </NewTab>
        </TabStrip>

        <Toolbar>
          <IconButton aria-label="Back">
            <MdArrowBack size={40} />
          </IconButton>
          <IconButton $color="#bdc0c3" aria-label="Forward">
            <MdArrowForward size={40} />
          </IconButton>
          <IconButton aria-label="Reload">
            <MdRefresh size={42} />
          </IconButton>
          <AddressBar>
            <IconButton $size={32} aria-label="Site information">
              <MdInfoOutline size={32} />
            </IconButton>
            <AddressInput aria-label="Address" defaultValue="localhost:3001" />
            <IconButton aria-label="Bookmark this tab">
              <MdStarBorder size={34} />
            </IconButton>
          </AddressBar>
          <IconButton aria-label="Ad blocker">
            <AdblockIcon />
          </IconButton>
          <IconButton aria-label="Layers">
            <LayersIcon />
          </IconButton>
          <IconButton aria-label="Extensions">
            <MdExtension size={34} />
          </IconButton>
          <IconButton aria-label="Media control">
            <MdQueueMusic size={40} />
          </IconButton>
          <IconButton aria-label="Profile">
            <Avatar />
          </IconButton>
          <IconButton aria-label="Browser menu">
            <MdMoreVert size={38} />
          </IconButton>
        </Toolbar>

        <Bookmarks aria-label="Bookmarks">
          {bookmarks.map(({ emoji, text }) => (
            <Bookmark key={emoji} href="#">
              <FolderIcon />
              <Emoji char={emoji} />
              {text && <BookmarkText $emoji>{text}</BookmarkText>}
            </Bookmark>
          ))}
          <Bookmark href="#">
            <YahooMark>
              Y<i>!</i>
            </YahooMark>
            <BookmarkText>
              Yahoo!<Kana>ニュース</Kana>
            </BookmarkText>
          </Bookmark>
          <OtherBookmarks>
            <Bookmark href="#">
              <FolderIcon />
              <BookmarkText $kana>その他のブックマーク</BookmarkText>
            </Bookmark>
          </OtherBookmarks>
        </Bookmarks>

        <Page>
          {headings.map((heading) => (
            <Heading key={heading}>{heading}</Heading>
          ))}
        </Page>
      </Window>

      <DockLayer>
        <Dock>
          {dockGroups.map((group, index) => (
            <React.Fragment key={index}>
              {index > 0 && <Separator />}
              {group.map((app) => (
                <DockItem key={app.name} aria-label={app.name}>
                  {app.icon}
                  {app.running && <Running />}
                  {app.badge && <Badge>{app.badge}</Badge>}
                </DockItem>
              ))}
            </React.Fragment>
          ))}
        </Dock>
      </DockLayer>
    </Desktop>
  );
}

export default App;
